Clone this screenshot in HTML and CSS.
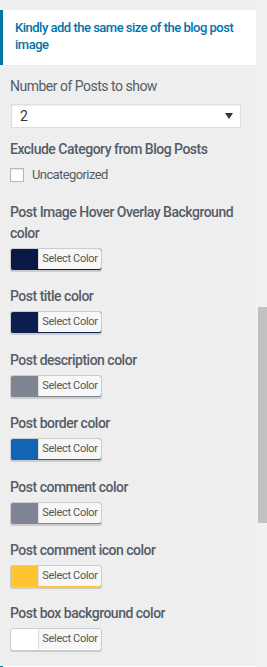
FILE: index.html
```html
<!DOCTYPE html>
<html>
<head>
    <link rel="stylesheet" href="styles.css">
</head>
<body>
    <div class="frame">
        <div class="panel">
            <div class="notice">Kindly add the same size of the blog post image</div>

            <div class="control">
                <label class="control-title light">Number of Posts to show</label>
                <div class="select-wrap">
                    <select class="select">
                        <option>2</option>
                    </select>
                    <svg class="select-arrow" width="8" height="8" viewBox="0 0 8 8">
                        <path d="M0 1h8L4 7z" fill="#32373c"></path>
                    </svg>
                </div>
            </div>

            <div class="control">
                <label class="control-title">Exclude Category from Blog Posts</label>
                <div class="check-row">
                    <span class="checkbox"></span>
                    <span class="check-label">Uncategorized</span>
                </div>
            </div>

            <div class="color-control">
                <label class="control-title">Post Image Hover Overlay Background color</label>
                <button class="color-result" style="background-color: #0b1846;"><span>Select Color</span></button>
            </div>

            <div class="color-control">
                <label class="control-title">Post title color</label>
                <button class="color-result" style="background-color: #0d1f4f;"><span>Select Color</span></button>
            </div>

            <div class="color-control">
                <label class="control-title">Post description color</label>
                <button class="color-result" style="background-color: #7f8591;"><span>Select Color</span></button>
            </div>

            <div class="color-control">
                <label class="control-title">Post border color</label>
                <button class="color-result" style="background-color: #1265b4;"><span>Select Color</span></button>
            </div>

            <div class="color-control">
                <label class="control-title">Post comment color</label>
                <button class="color-result" style="background-color: #7f8596;"><span>Select Color</span></button>
            </div>

            <div class="color-control">
                <label class="control-title">Post comment icon color</label>
                <button class="color-result" style="background-color: #fec431;"><span>Select Color</span></button>
            </div>

            <div class="color-control">
                <label class="control-title">Post box background color</label>
                <button class="color-result" style="background-color: #ffffff;"><span>Select Color</span></button>
            </div>

            <div class="next-section"></div>
        </div>

        <div class="scroll-track">
            <div class="scroll-thumb"></div>
        </div>
    </div>
</body>
</html>
```

FILE: styles.css
```css
* {
    box-sizing: border-box;
    margin: 0;
    padding: 0;
}

html, body {
    height: 100%;
    overflow: hidden;
}

body {
    background-color: #eeeeee;
    color: #555d66;
    font-family: Roboto, "Noto Sans", Arial, sans-serif;
}

.frame {
    display: flex;
    align-items: flex-start;
}

.panel {
    width: 256px;
    flex-shrink: 0;
    padding-top: 10px;
}

.notice {
    background-color: #ffffff;
    border-left: 3px solid #0073aa;
    padding: 9px 8px 12px 12px;
    color: #0073aa;
    font-size: 13px;
    font-weight: 500;
    line-height: 17px;
    letter-spacing: -0.5px;
}

.control {
    padding: 0 10px;
}

.control-title {
    display: block;
    font-size: 14px;
    font-weight: 500;
    line-height: 21px;
    letter-spacing: -0.5px;
    color: #555d66;
}

.control-title.light {
    font-weight: 400;
}

.notice + .control {
    margin-top: 11px;
}

.select-wrap {
    position: relative;
    width: 230px;
    margin: 7px 0 0 1px;
}

.select {
    display: block;
    width: 100%;
    height: 24px;
    padding: 0 8px;
    border: 1px solid #dddddd;
    border-radius: 0;
    background-color: #ffffff;
    box-shadow: inset 0 1px 2px rgba(0, 0, 0, 0.07);
    font-family: inherit;
    font-size: 14px;
    color: #32373c;
    -webkit-appearance: none;
    appearance: none;
    outline: none;
}

.select-arrow {
    position: absolute;
    right: 8px;
    top: 8px;
}

.control + .control {
    margin-top: 11px;
}

.check-row {
    display: flex;
    align-items: center;
    gap: 8px;
    margin-top: 7px;
}

.checkbox {
    width: 14px;
    height: 14px;
    border: 1px solid #b4b9be;
    background-color: #ffffff;
    box-shadow: inset 0 1px 2px rgba(0, 0, 0, 0.1);
}

.check-label {
    font-size: 13px;
    letter-spacing: -0.6px;
    color: #555d66;
}

.color-control {
    padding: 0 10px;
    margin-top: 20px;
}

.color-control + .color-control {
    margin-top: 15.4px;
}

.color-result {
    display: flex;
    justify-content: flex-end;
    width: 92px;
    height: 23px;
    margin-top: 4px;
    padding: 0 0 1px 27px;
    border: 1px solid #cccccc;
    border-radius: 3px;
    box-shadow: 0 1px 0 #cccccc;
    cursor: pointer;
    font-family: inherit;
}

.color-result span {
    flex-grow: 1;
    height: 100%;
    border-left: 1px solid #dddddd;
    border-radius: 0 2px 2px 0;
    background-color: #f7f7f7;
    color: #555555;
    font-size: 11px;
    line-height: 20px;
    letter-spacing: -0.3px;
    text-align: center;
}

.next-section {
    height: 40px;
    margin-top: 15px;
    background-color: #ffffff;
    border-left: 3px solid #0073aa;
}

.scroll-track {
    width: 11px;
    height: 667px;
    background-color: #f1f1f1;
    padding: 307px 0 0 2px;
}

.scroll-thumb {
    height: 216px;
    background-color: #c1c1c1;
}
```
